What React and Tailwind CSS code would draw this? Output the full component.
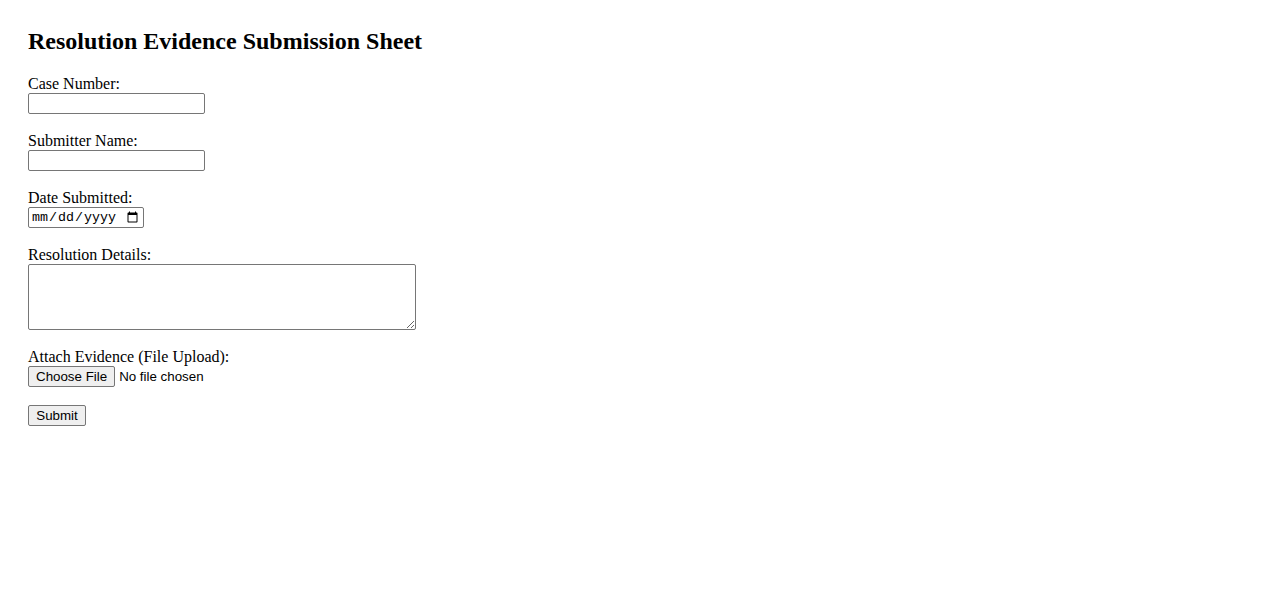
import React from "react";

const serif = { fontFamily: '"Liberation Serif", "Times New Roman", serif' };

const Field = ({ label, children }) => (
  <div className="mb-[18px]">
    <label className="block text-[16px] leading-[18px]">{label}</label>
    {children}
  </div>
);

const inputCls =
  "block border border-[#767676] rounded-[2px] bg-white px-[2px] text-[13.33px] outline-none";

export default function App() {
  return (
    <div className="min-h-screen bg-white text-black pt-[27px] pl-[28px]" style={serif}>
      <h1 className="text-[24px] font-bold leading-[28px] mb-[20px]">
        Resolution Evidence Submission Sheet
      </h1>

      <form onSubmit={(e) => e.preventDefault()}>
        <Field label="Case Number:">
          <input type="text" className={`${inputCls} w-[177px] h-[21px]`} />
        </Field>

        <Field label="Submitter Name:">
          <input type="text" className={`${inputCls} w-[177px] h-[21px]`} />
        </Field>

        <Field label="Date Submitted:">
          <input
            type="date"
            className={`${inputCls} w-[116px] h-[21px] font-['Liberation_Mono',monospace]`}
          />
        </Field>

        <Field label="Resolution Details:">
          <textarea className={`${inputCls} w-[388px] h-[66px] resize`} />
        </Field>

        <Field label="Attach Evidence (File Upload):">
          <input
            type="file"
            className="block text-[13.33px] leading-[20px] font-['Liberation_Sans',Arial,sans-serif] file:border file:border-[#767676] file:rounded-[2px] file:bg-[#efefef] file:px-[7px] file:py-0 file:h-[21px] file:mr-[4px] file:text-[13.33px]"
          />
        </Field>

        <button
          type="submit"
          className="block w-[58px] h-[21px] border border-[#767676] rounded-[2px] bg-[#efefef] text-[13.33px] font-['Liberation_Sans',Arial,sans-serif]"
        >
          Submit
        </button>
      </form>
    </div>
  );
}
